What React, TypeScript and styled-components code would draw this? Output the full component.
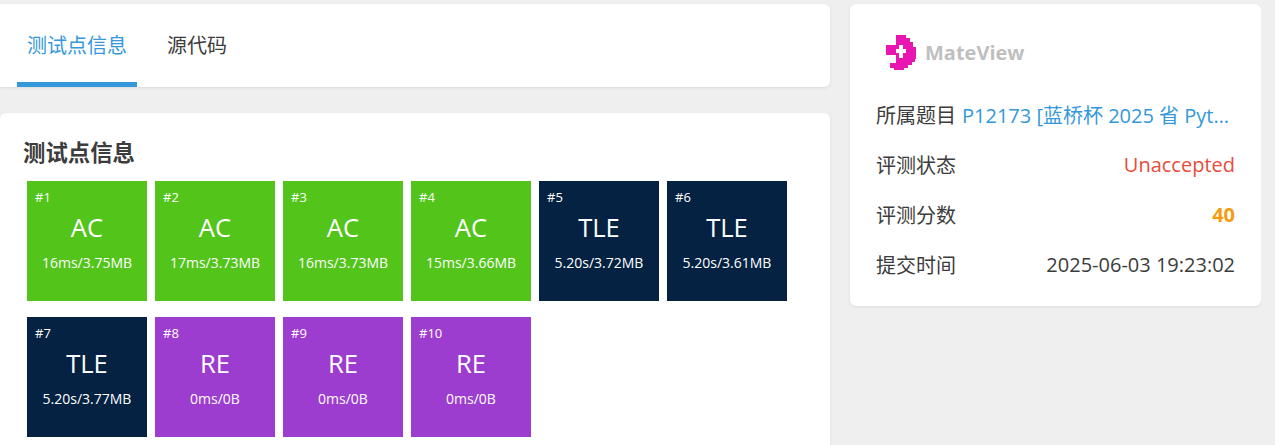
import React from "react";
import styled, { createGlobalStyle } from "styled-components";

const Global = createGlobalStyle`
  html, body { margin: 0; padding: 0; height: 445px; overflow: hidden; background: #efefef; }
  body { font-family: "Open Sans", "Noto Sans CJK SC", sans-serif; color: #3c3c3c; }
  * { box-sizing: border-box; }
`;

const Page = styled.div`
  display: flex;
  align-items: flex-start;
  gap: 20px;
  width: 1261px;
  height: 445px;
  padding-top: 4px;
  overflow: hidden;
`;
const Main = styled.div`
  width: 830px;
  flex: none;
  display: flex;
  flex-direction: column;
  gap: 26px;
`;
const Card = styled.div`
  background: #fff;
  border-radius: 0 6px 6px 0;
  box-shadow: 0 1px 3px rgba(26, 26, 26, 0.1);
`;
const TabCard = styled(Card)`
  height: 83px;
  display: flex;
  padding-left: 17px;
  gap: 20px;
`;
const Tab = styled.div<{ $active?: boolean }>`
  height: 83px;
  padding: 0 10px;
  font-size: 20px;
  line-height: 84px;
  color: ${(p) => (p.$active ? "#3498db" : "#3c3c3c")};
  border-bottom: 5px solid ${(p) => (p.$active ? "#3498db" : "transparent")};
`;
const InfoCard = styled(Card)`
  height: 420px;
  padding: 23px 23px;
  border-radius: 6px 6px 0 0;
`;
const Title = styled.h2`
  margin: 0 0 11px;
  font-size: 22.4px;
  line-height: 34px;
  height: 34px;
  font-weight: 700;
  color: #3c3c3c;
`;
const Grid = styled.div`
  display: flex;
  flex-wrap: wrap;
  gap: 16px 8px;
  padding-left: 4px;
  width: 780px;
`;
const Tile = styled.div<{ $bg: string }>`
  position: relative;
  width: 120px;
  height: 120px;
  background: ${(p) => p.$bg};
  color: #fff;
  text-align: center;
`;
const Num = styled.span`
  position: absolute;
  left: 8px;
  top: 7px;
  font-size: 13px;
  line-height: 18px;
`;
const Verdict = styled.div`
  padding-top: 29px;
  font-size: 25.6px;
  line-height: 36px;
`;
const Stat = styled.div`
  margin-top: 5px;
  font-size: 14px;
  line-height: 24px;
`;
const Side = styled(Card)`
  width: 411px;
  flex: none;
  height: 302px;
  padding: 25px 26px 0;
  border-radius: 6px;
`;
const Logo = styled.div`
  display: flex;
  align-items: center;
  height: 48px;
  padding-left: 10px;
  gap: 8px;
  margin-bottom: 12px;
`;
const LogoText = styled.span`
  margin-top: -2px;
  font-size: 20px;
  font-weight: 700;
  color: #bfbfbf;
  font-family: "Open Sans", sans-serif;
`;
const Row = styled.div`
  display: flex;
  justify-content: space-between;
  align-items: center;
  height: 50px;
  font-size: 20px;
  white-space: nowrap;
`;
const Label = styled.span`
  flex: none;
  margin-right: 6px;
`;
const Value = styled.span<{ $color?: string; $bold?: boolean }>`
  color: ${(p) => p.$color ?? "#3c3c3c"};
  font-weight: ${(p) => (p.$bold ? 700 : 400)};
`;
const ProblemLink = styled.span`
  color: #3498db;
  overflow: hidden;
  text-overflow: ellipsis;
  white-space: nowrap;
  min-width: 0;
`;

const GREEN = "#52c41a";
const NAVY = "#052242";
const PURPLE = "#9d3dcf";

const tiles = [
  ["AC", "16ms/3.75MB", GREEN],
  ["AC", "17ms/3.73MB", GREEN],
  ["AC", "16ms/3.73MB", GREEN],
  ["AC", "15ms/3.66MB", GREEN],
  ["TLE", "5.20s/3.72MB", NAVY],
  ["TLE", "5.20s/3.61MB", NAVY],
  ["TLE", "5.20s/3.77MB", NAVY],
  ["RE", "0ms/0B", PURPLE],
  ["RE", "0ms/0B", PURPLE],
  ["RE", "0ms/0B", PURPLE],
];

const LogoMark = () => (
  <svg width="31" height="36" viewBox="0 0 31 36">
    <path
      fill="#e815b0"
      d="M10 0h10v3h4v4h3v5h3v12h-1v3h-3v3h-4v3h-4v2H8v-2H4v-5h6z"
    />
    <path fill="#e815b0" d="M0 10h10v10H0z" />
    <path fill="#fff" d="M13 10h4v4h3v4h-3v5h-4v-5h-3v-4h3z" />
  </svg>
);

export default function App() {
  return (
    <>
      <Global />
      <Page>
        <Main>
          <TabCard>
            <Tab $active>测试点信息</Tab>
            <Tab>源代码</Tab>
          </TabCard>
          <InfoCard>
            <Title>测试点信息</Title>
            <Grid>
              {tiles.map(([v, s, c], i) => (
                <Tile key={i} $bg={c}>
                  <Num>#{i + 1}</Num>
                  <Verdict>{v}</Verdict>
                  <Stat>{s}</Stat>
                </Tile>
              ))}
            </Grid>
          </InfoCard>
        </Main>
        <Side>
          <Logo>
            <LogoMark />
            <LogoText>MateView</LogoText>
          </Logo>
          <Row>
            <Label>所属题目</Label>
            <ProblemLink>P12173 [蓝桥杯 2025 省 Python B 组] 最多次数</ProblemLink>
          </Row>
          <Row>
            <Label>评测状态</Label>
            <Value $color="#e74c3c">Unaccepted</Value>
          </Row>
          <Row>
            <Label>评测分数</Label>
            <Value $color="#f39c11" $bold>40</Value>
          </Row>
          <Row>
            <Label>提交时间</Label>
            <Value>2025-06-03 19:23:02</Value>
          </Row>
        </Side>
      </Page>
    </>
  );
}
